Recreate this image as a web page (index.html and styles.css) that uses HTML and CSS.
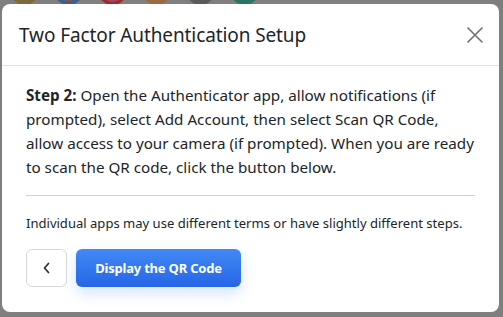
FILE: index.html
```html
<!DOCTYPE html>
<html>
<head>
<meta charset="utf-8">
<link rel="stylesheet" href="styles.css">
</head>
<body>
<div class="page">
  <div class="avatars">
    <span class="av av1"></span>
    <span class="av av2"></span>
    <span class="av av3"></span>
    <span class="av av4"></span>
    <span class="av av5"></span>
    <span class="av av6"></span>
  </div>
</div>
<div class="modal">
  <div class="modal-header">
    <h2 class="modal-title">Two Factor Authentication Setup</h2>
    <button class="close" aria-label="Close">
      <svg width="18" height="18" viewBox="0 0 18 18"><path d="M1.5 1.5L16.5 16.5M16.5 1.5L1.5 16.5" stroke="#707070" stroke-width="1.6" fill="none"/></svg>
    </button>
  </div>
  <div class="modal-body">
    <p class="step"><strong>Step 2:</strong> Open the Authenticator app, allow notifications (if prompted), select Add Account, then select Scan QR Code, allow access to your camera (if prompted). When you are ready to scan the QR code, click the button below.</p>
    <hr class="divider">
    <p class="note">Individual apps may use different terms or have slightly different steps.</p>
    <div class="actions">
      <button class="btn-back" aria-label="Back">
        <svg width="10" height="12" viewBox="0 0 10 12"><path d="M6.5 1.5L2.5 6L6.5 10.5" stroke="#333" stroke-width="1.8" fill="none" stroke-linecap="round" stroke-linejoin="round"/></svg>
      </button>
      <button class="btn-primary">Display the QR Code</button>
    </div>
  </div>
</div>
</body>
</html>
```
FILE: styles.css
```css
* { box-sizing: border-box; }
html, body { margin: 0; padding: 0; }
body {
  width: 503px;
  height: 317px;
  overflow: hidden;
  background: #7f7f7f;
  font-family: "Noto Sans", "Open Sans", sans-serif;
  color: #212529;
  position: relative;
}
.avatars {
  display: flex;
  gap: 15px;
  padding-left: 10px;
  margin-top: -24px;
}
.av {
  width: 29px;
  height: 29px;
  border-radius: 50%;
  display: block;
}
.av1 { background: #7d6a3c; }
.av2 { background: #8a5a3a; box-shadow: inset 0 0 0 4px #3d5f95; }
.av3 { background: #a0485a; box-shadow: inset 0 0 0 3px #9a2c2c; }
.av4 { background: #9c6a3e; }
.av5 { background: #5e5a58; }
.av6 { background: #2c7565; }

.modal {
  position: absolute;
  left: 2px;
  top: 4px;
  width: 497px;
  height: 308px;
  background: #fff;
  border-radius: 8px;
  display: flex;
  flex-direction: column;
}
.modal-header {
  height: 62px;
  border-bottom: 1px solid #dee2e6;
  display: flex;
  align-items: center;
  justify-content: space-between;
  padding: 0 15px 0 17px;
}
.modal-title {
  margin: 0;
  font-size: 19px;
  font-weight: 400;
  color: #212529;
  letter-spacing: -0.1px;
}
.close {
  border: 0;
  background: transparent;
  padding: 0;
  width: 18px;
  height: 18px;
  display: flex;
}
.modal-body {
  padding: 17px 24px 25px 24px;
  flex: 1;
  display: flex;
  flex-direction: column;
}
.step {
  margin: 0;
  font-size: 15.2px;
  line-height: 24px;
}
.step strong { font-weight: 700; }
.divider {
  border: 0;
  border-top: 1px solid #cfd2d5;
  margin: 16px 0 0 0;
}
.note {
  margin: 17px 0 0 0;
  font-size: 13.05px;
  line-height: 20px;
}
.actions {
  display: flex;
  gap: 9px;
  margin-top: 16px;
}
.btn-back {
  width: 41px;
  height: 38px;
  border: 1px solid #d6d9dc;
  border-radius: 6px;
  background: #fff;
  display: flex;
  align-items: center;
  justify-content: center;
  padding: 0;
}
.btn-primary {
  width: 165px;
  height: 38px;
  border: 0;
  border-radius: 6px;
  background: linear-gradient(180deg, #4189f5 0%, #2666e6 100%);
  color: #fff;
  font-family: "Noto Sans", "Open Sans", sans-serif;
  font-weight: 700;
  font-size: 13px;
  letter-spacing: -0.2px;
  box-shadow: 0 6px 14px rgba(59, 130, 246, 0.22);
  padding: 0;
}
```
